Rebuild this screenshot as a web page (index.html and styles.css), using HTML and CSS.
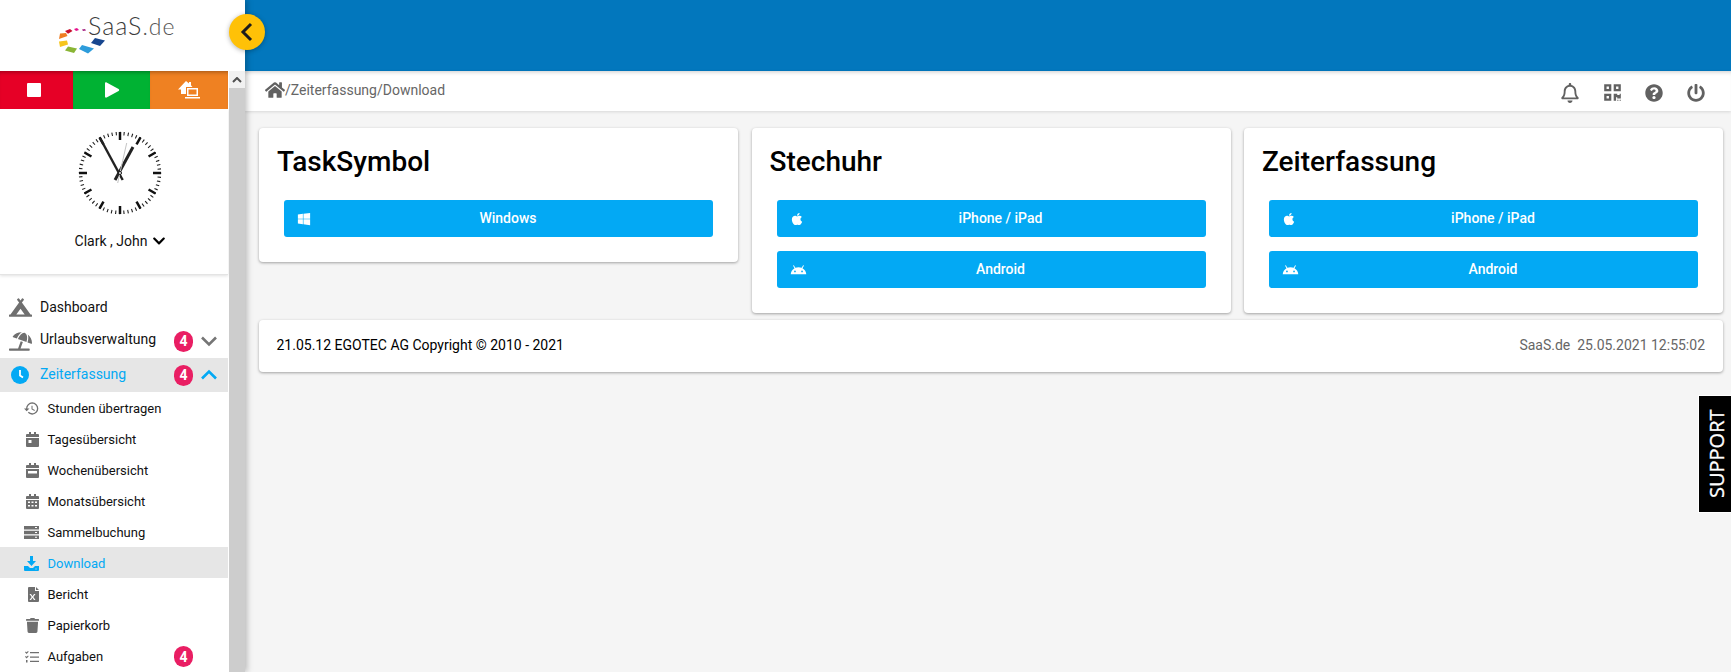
FILE: index.html
```html
<!DOCTYPE html>
<html lang="de">
<head>
<meta charset="utf-8">
<title>Zeiterfassung - Download</title>
<link rel="stylesheet" href="styles.css">
</head>
<body>
<div class="app">
  <aside class="sidebar">
    <div class="logo">
      <svg class="logo-svg" viewBox="0 0 245 71" width="245" height="71">
        <polygon points="60,33.500 66,33 67.500,36 59,39" fill="#ef7d22"/>
        <polygon points="65,31 70,29 72.500,31 68,33.800" fill="#c8102e"/>
        <polygon points="74,29 77,28 79,30 76,31" fill="#e5128c"/>
        <polygon points="82,29.500 85,29 86,30.500 83,31" fill="#a4217f"/>
        <polygon points="59,41.500 67,40.500 68,44.500 60,47" fill="#f6c51b"/>
        <polygon points="68,46.500 77,48.500 74,53 65,50.500" fill="#8ab535"/>
        <polygon points="82,45 94,48.500 88,53.500 79,49" fill="#2d9cdb"/>
        <polygon points="95,38 105,40.500 100,46 91,43" fill="#17468f"/>
        <text class="logo-text" x="88" y="34.500">SaaS<tspan class="logo-de">.de</tspan></text>
      </svg>
    </div>
    <div class="side-body">
      <div class="side-content">
        <div class="actions">
          <button class="act act-red"><span class="stop"></span></button>
          <button class="act act-green"><svg width="16" height="17" viewBox="0 0 16 17"><path class="w" d="M1 1.500c0-1 .8-1.400 1.600-1l12 6.500c.8.500.8 1.500 0 2l-12 6.500c-.8.400-1.600 0-1.600-1z"/></svg></button>
          <button class="act act-orange"><svg width="22" height="18" viewBox="0 0 22 18"><path class="w" d="M8 0l3 2.600V1h2v3.300L14.500 6H8v7H3V8.500H0zM9 7h11v8H9zm1.500 1.500v5h8v-5zM7 16h15v1.500H7z"/></svg></button>
        </div>
        <div class="profile">
          <svg class="clock" width="100" height="100" viewBox="-50 -50 100 100">
            <circle class="minutes" r="39.500" transform="rotate(-90)"/>
            <g class="hours">
              <line y1="-41" y2="-33"/>
              <line y1="-41" y2="-33" transform="rotate(30)"/>
              <line y1="-41" y2="-33" transform="rotate(60)"/>
              <line y1="-41" y2="-33" transform="rotate(90)"/>
              <line y1="-41" y2="-33" transform="rotate(120)"/>
              <line y1="-41" y2="-33" transform="rotate(150)"/>
              <line y1="-41" y2="-33" transform="rotate(180)"/>
              <line y1="-41" y2="-33" transform="rotate(210)"/>
              <line y1="-41" y2="-33" transform="rotate(240)"/>
              <line y1="-41" y2="-33" transform="rotate(270)"/>
              <line y1="-41" y2="-33" transform="rotate(300)"/>
              <line y1="-41" y2="-33" transform="rotate(330)"/>
            </g>
            <line class="hand-h" x1="-5" y1="7" x2="13" y2="-26"/>
            <line class="hand-m" x1="2.700" y1="7" x2="-20" y2="-35"/>
            <line class="hand-s" x1="-2.300" y1="10" x2="6.700" y2="-30"/>
            <circle class="hub" r="1.500"/>
          </svg>
          <div class="user">Clark , John <svg width="14" height="14" viewBox="0 0 448 512"><path d="M207 381.500L12.700 187.100c-9.400-9.400-9.400-24.600 0-33.900l22.700-22.700c9.400-9.400 24.500-9.400 33.900 0L224 284.500l154.700-154c9.400-9.300 24.500-9.300 33.900 0l22.700 22.700c9.400 9.400 9.400 24.600 0 33.900L241 381.500c-9.400 9.400-24.600 9.400-34 0z"/></svg></div>
        </div>
        <nav class="nav">
          <a class="row main">
            <span class="ic-main"><svg width="23" height="19" viewBox="0 0 640 512"><path class="g" d="M624 448h-24.680L359.540 117.750l53.410-73.550c5.190-7.150 3.610-17.160-3.540-22.350l-25.900-18.790c-7.150-5.190-17.150-3.610-22.350 3.550L320 63.300 278.830 6.600c-5.190-7.150-15.200-8.740-22.350-3.550l-25.880 18.800c-7.150 5.190-8.740 15.200-3.540 22.350l53.410 73.550L40.680 448H16c-8.840 0-16 7.160-16 16v32c0 8.840 7.160 16 16 16h608c8.840 0 16-7.160 16-16v-32c0-8.840-7.160-16-16-16zM320 288l116.360 160H203.640L320 288z"/></svg></span>
            <span class="label">Dashboard</span>
          </a>
          <a class="row main lift">
            <span class="ic-main"><svg width="23" height="19" viewBox="0 0 640 512"><path class="g" d="M115.380 136.900l102.110 37.180c35.190-81.540 86.210-144.290 139-173.700-95.880-4.890-188.780 36.960-248.530 111.800-6.690 8.400-2.660 21.050 7.420 24.720zm132.250 48.160l238.480 86.830c35.760-121.380 18.700-231.660-42.630-253.980-7.400-2.700-15.130-4-23.090-4-58.020.01-128.270 69.170-172.760 171.150zM521.480 60.500c6.220 16.300 10.830 34.600 13.200 55.190 5.740 49.890-1.420 108.230-18.950 166.980l102.620 37.360c10.090 3.670 21.310-3.430 21.570-14.170 2.320-95.690-41.910-187.440-118.440-245.360zM560 447.980H321.060L386 269.500l-60.140-21.900-72.900 200.370H16c-8.840 0-16 7.160-16 16.010v32.010C0 504.830 7.160 512 16 512h544c8.840 0 16-7.170 16-16.010v-32.010c0-8.840-7.160-16-16-16z"/></svg></span>
            <span class="label">Urlaubsverwaltung</span>
            <span class="badge">4</span>
            <svg class="chev" width="18" height="12" viewBox="0 0 18 12"><path class="chev-g" d="M2 2.500l7 7 7-7"/></svg>
          </a>
          <a class="row main active lift-small">
            <span class="ic-main"><svg width="18" height="18" viewBox="0 0 18 18"><circle class="b" cx="9" cy="9" r="9"/><path class="clockhand" d="M9 4v5.500l3 2"/></svg></span>
            <span class="label">Zeiterfassung</span>
            <span class="badge">4</span>
            <svg class="chev" width="18" height="12" viewBox="0 0 18 12"><path class="chev-b" d="M2 9.500l7-7 7 7"/></svg>
          </a>
          <a class="row sub">
            <span class="ic-sub"><svg width="15" height="15" viewBox="1 3 22 18"><path class="g" d="M13 3a9 9 0 0 0-9 9H1l3.890 3.890.07.14L9 12H6c0-3.870 3.130-7 7-7s7 3.130 7 7-3.130 7-7 7c-1.930 0-3.680-.79-4.940-2.060l-1.420 1.420A8.954 8.954 0 0 0 13 21a9 9 0 0 0 0-18zm-1 5v5l4.280 2.540.72-1.210-3.500-2.080V8H12z"/></svg></span>
            <span class="label">Stunden übertragen</span>
          </a>
          <a class="row sub">
            <span class="ic-sub"><svg width="13" height="15" viewBox="0 0 13 15"><path class="g" fill-rule="evenodd" d="M3 0h2v2h3V0h2v2h2a1 1 0 0 1 1 1v2H0V3a1 1 0 0 1 1-1h2zM0 6h13v8a1 1 0 0 1-1 1H1a1 1 0 0 1-1-1zm2.500 2v3h3V8z"/></svg></span>
            <span class="label">Tagesübersicht</span>
          </a>
          <a class="row sub">
            <span class="ic-sub"><svg width="13" height="15" viewBox="0 0 13 15"><path class="g" fill-rule="evenodd" d="M3 0h2v2h3V0h2v2h2a1 1 0 0 1 1 1v2H0V3a1 1 0 0 1 1-1h2zM0 6h13v8a1 1 0 0 1-1 1H1a1 1 0 0 1-1-1zm2 2v2.500h9V8z"/></svg></span>
            <span class="label">Wochenübersicht</span>
          </a>
          <a class="row sub">
            <span class="ic-sub"><svg width="13" height="15" viewBox="0 0 13 15"><path class="g" fill-rule="evenodd" d="M3 0h2v2h3V0h2v2h2a1 1 0 0 1 1 1v2H0V3a1 1 0 0 1 1-1h2zM0 6h13v8a1 1 0 0 1-1 1H1a1 1 0 0 1-1-1zm2 1.500V9h2V7.500zm3.500 0V9h2V7.500zm3.500 0V9h2V7.500zM2 11v1.500h2V11zm3.500 0v1.500h2V11zm3.500 0v1.500h2V11z"/></svg></span>
            <span class="label">Monatsübersicht</span>
          </a>
          <a class="row sub">
            <span class="ic-sub"><svg width="15" height="13" viewBox="0 0 15 13"><path class="g" fill-rule="evenodd" d="M0 0h15v3.500H0zM0 4.700h15v3.600H0zM0 9.500h15V13H0zM11 1v1h2V1zM11 6v1h2V6zM11 10.700v1h2v-1z"/></svg></span>
            <span class="label">Sammelbuchung</span>
          </a>
          <a class="row sub active">
            <span class="ic-sub"><svg width="15" height="15" viewBox="0 0 15 15"><path class="b" fill-rule="evenodd" d="M6 0h3v5h3L7.500 10 3 5h3zM0 10h4l2 2h3l2-2h4v4a1 1 0 0 1-1 1H1a1 1 0 0 1-1-1zm11.500 2.500v1h1v-1z"/></svg></span>
            <span class="label">Download</span>
          </a>
          <a class="row sub">
            <span class="ic-sub"><svg width="11" height="15" viewBox="0 0 11 15"><path class="g" fill-rule="evenodd" d="M0 1a1 1 0 0 1 1-1h6v4h4v10a1 1 0 0 1-1 1H1a1 1 0 0 1-1-1zM8 0l3 3H8zM3 7l1.500 2.200L6 7h1.500L5.300 10l2.200 3H6l-1.500-2.200L3 13H1.500l2.200-3-2.200-3z"/></svg></span>
            <span class="label">Bericht</span>
          </a>
          <a class="row sub">
            <span class="ic-sub"><svg width="13" height="15" viewBox="0 0 448 512"><path class="g" d="M432 32H312l-9.400-18.700A24 24 0 0 0 281.100 0H166.800a23.720 23.720 0 0 0-21.400 13.300L136 32H16A16 16 0 0 0 0 48v32a16 16 0 0 0 16 16h416a16 16 0 0 0 16-16V48a16 16 0 0 0-16-16zM53.200 467a48 48 0 0 0 47.900 45h245.800a48 48 0 0 0 47.900-45L416 128H32z"/></svg></span>
            <span class="label">Papierkorb</span>
          </a>
          <a class="row sub">
            <span class="ic-sub"><svg width="14" height="12" viewBox="0 0 14 12"><path class="g" d="M5 1h9v1.300H5zM5 5.400h9v1.300H5zM5 9.800h9v1.300H5zM0 1.200l.8-.7.8.8L3 0l.7.700-2.100 2.200zM0 5.700l.8-.7.8.8L3 4.500l.7.700-2.100 2.200zM1 9h1.500v2.500H1z"/></svg></span>
            <span class="label">Aufgaben</span>
            <span class="badge">4</span>
            <span class="chev-space"></span>
          </a>
        </nav>
      </div>
      <div class="scrollbar">
        <div class="scroll-btn"><svg width="10" height="6" viewBox="0 0 10 6"><path class="scroll-arrow" d="M1 5l4-4 4 4"/></svg></div>
        <div class="scroll-thumb"></div>
      </div>
    </div>
  </aside>

  <div class="main-area">
    <header class="topbar"></header>
    <div class="crumbbar">
      <div class="crumbs">
        <svg width="20" height="18" viewBox="0 0 576 512"><path class="g6" d="M280.370 148.260L96 300.110V464a16 16 0 0 0 16 16l112.060-.29a16 16 0 0 0 15.920-16V368a16 16 0 0 1 16-16h64a16 16 0 0 1 16 16v95.640a16 16 0 0 0 16 16.050L464 480a16 16 0 0 0 16-16V300L295.670 148.260a12.190 12.190 0 0 0-15.300 0zM571.600 251.470L488 182.560V44.050a12 12 0 0 0-12-12h-56a12 12 0 0 0-12 12v72.610L318.470 43a48 48 0 0 0-61 0L4.340 251.470a12 12 0 0 0-1.600 16.900l25.500 31A12 12 0 0 0 45.150 301l235.220-193.740a12.190 12.190 0 0 1 15.300 0L530.900 301a12 12 0 0 0 16.900-1.600l25.500-31a12 12 0 0 0-1.700-16.930z"/></svg>
        <span>/Zeiterfassung/Download</span>
      </div>
      <div class="tools">
        <svg width="18" height="20" viewBox="0 0 448 512"><path class="g6" d="M439.390 362.290c-19.320-20.760-55.470-51.990-55.470-154.290 0-77.700-54.480-139.900-127.940-155.160V32c0-17.670-14.320-32-31.980-32s-31.980 14.330-31.980 32v20.840C118.560 68.100 64.080 130.300 64.080 208c0 102.300-36.150 133.530-55.470 154.290-6 6.450-8.660 14.160-8.610 21.710.11 16.400 12.980 32 32.100 32h383.800c19.120 0 32-15.600 32.100-32 .05-7.550-2.610-15.270-8.610-21.710zM67.530 368c21.220-27.970 44.420-74.330 44.530-159.420 0-.2-.06-.38-.06-.58 0-61.860 50.140-112 112-112s112 50.140 112 112c0 .2-.06.38-.06.58.11 85.100 23.310 131.460 44.530 159.420H67.530zM224 512c35.320 0 63.970-28.650 63.970-64H160.030c0 35.350 28.650 64 63.970 64z"/></svg>
        <svg width="17" height="19" viewBox="0 0 448 512"><path class="g6" d="M0 224h192V32H0v192zM64 96h64v64H64V96zm192-64v192h192V32H256zm128 128h-64V96h64v64zM0 480h192V288H0v192zm64-128h64v64H64v-64zm352-64h32v128h-96v-32h-32v96h-64V288h96v32h64v-32zm0 160h32v32h-32v-32zm-64 0h32v32h-32v-32z"/></svg>
        <svg width="18" height="18" viewBox="0 0 512 512"><path class="g6" d="M504 256c0 136.997-111.043 248-248 248S8 392.997 8 256C8 119.083 119.043 8 256 8s248 111.083 248 248zM262.655 90c-54.497 0-89.255 22.957-116.549 63.758-3.536 5.286-2.353 12.415 2.715 16.258l34.699 26.310c5.205 3.947 12.621 3.008 16.665-2.122 17.864-22.658 30.113-35.797 57.303-35.797 20.429 0 45.698 13.148 45.698 32.958 0 14.976-12.363 22.667-32.534 33.976C247.128 238.528 216 254.941 216 296v4c0 6.627 5.373 12 12 12h56c6.627 0 12-5.373 12-12v-1.333c0-28.462 83.186-29.647 83.186-106.667 0-58.002-60.165-102-116.531-102zM256 338c-25.365 0-46 20.635-46 46 0 25.364 20.635 46 46 46s46-20.636 46-46c0-25.365-20.635-46-46-46z"/></svg>
        <svg width="18" height="18" viewBox="0 0 512 512"><path class="g6" d="M400 54.100c63 45 104 118.600 104 201.900 0 136.800-110.800 247.700-247.500 248C120 504.300 8.200 393 8 256.400 7.900 173.100 48.900 99.300 111.800 54.200c11.700-8.300 28-4.800 35 7.700L162.600 90c5.900 10.500 3.100 23.800-6.600 31-41.500 30.800-68 79.600-68 134.900-.1 92.300 74.500 168.100 168 168.100 91.600 0 168.600-74.200 168-169.100-.3-51.800-24.700-101.800-68.100-134-9.700-7.200-12.400-20.500-6.500-30.900l15.800-28.100c7-12.400 23.200-16.100 34.800-7.800zM296 264V24c0-13.300-10.700-24-24-24h-32c-13.300 0-24 10.700-24 24v240c0 13.300 10.700 24 24 24h32c13.300 0 24-10.700 24-24z"/></svg>
      </div>
    </div>
    <main class="content">
      <div class="cards">
        <section class="card">
          <h2>TaskSymbol</h2>
          <a class="dl"><svg class="dl-ic" width="14" height="14" viewBox="0 0 448 512"><path class="w" d="M0 93.700l183.600-25.300v177.400H0V93.700zm0 324.600l183.600 25.300V268.400H0v149.900zm203.800 28L448 480V268.400H203.800v177.900zm0-380.600v180.100H448V32L203.800 65.700z"/></svg>Windows</a>
        </section>
        <section class="card">
          <h2>Stechuhr</h2>
          <a class="dl"><svg class="dl-ic" width="14" height="14" viewBox="0 0 384 512"><path class="w" d="M318.700 268.700c-.2-36.700 16.400-64.400 50-84.800-18.800-26.900-47.200-41.700-84.700-44.600-35.500-2.800-74.300 20.700-88.500 20.700-15 0-49.400-19.700-76.400-19.700C63.300 141.200 4 184.800 4 273.500q0 39.300 14.400 81.200c12.800 36.700 59 126.700 107.200 125.200 25.200-.6 43-17.900 75.800-17.900 31.800 0 48.300 17.900 76.400 17.900 48.600-.7 90.400-82.500 102.600-119.300-65.200-30.700-61.700-90-61.700-91.900zm-56.600-164.200c27.300-32.400 24.800-61.900 24-72.500-24.100 1.400-52 16.400-67.900 34.900-17.500 19.800-27.800 44.300-25.600 71.900 26.100 2 49.900-11.400 69.500-34.300z"/></svg>iPhone / iPad</a>
          <a class="dl"><svg class="dl-ic" width="17" height="17" viewBox="0 0 24 24"><path class="w" d="M17.600 9.480l1.840-3.180c.16-.31.04-.69-.26-.85a.637.637 0 0 0-.83.22l-1.880 3.240a11.430 11.430 0 0 0-8.940 0L5.650 5.670a.643.643 0 0 0-.87-.2c-.28.18-.37.54-.22.83L6.400 9.480A10.810 10.810 0 0 0 1 18h22a10.810 10.810 0 0 0-5.400-8.520zM7 15.250a1.250 1.250 0 1 1 0-2.500 1.250 1.250 0 0 1 0 2.500zm10 0a1.250 1.250 0 1 1 0-2.500 1.250 1.250 0 0 1 0 2.500z"/></svg>Android</a>
        </section>
        <section class="card">
          <h2>Zeiterfassung</h2>
          <a class="dl"><svg class="dl-ic" width="14" height="14" viewBox="0 0 384 512"><path class="w" d="M318.700 268.700c-.2-36.700 16.400-64.400 50-84.800-18.800-26.900-47.200-41.700-84.700-44.600-35.500-2.800-74.300 20.700-88.500 20.700-15 0-49.400-19.700-76.400-19.700C63.300 141.200 4 184.800 4 273.500q0 39.300 14.400 81.200c12.800 36.700 59 126.700 107.200 125.200 25.200-.6 43-17.900 75.800-17.900 31.800 0 48.300 17.900 76.400 17.900 48.600-.7 90.400-82.500 102.600-119.300-65.200-30.700-61.700-90-61.700-91.900zm-56.600-164.200c27.300-32.400 24.800-61.900 24-72.500-24.100 1.400-52 16.400-67.900 34.900-17.500 19.800-27.800 44.300-25.600 71.900 26.100 2 49.900-11.400 69.500-34.300z"/></svg>iPhone / iPad</a>
          <a class="dl"><svg class="dl-ic" width="17" height="17" viewBox="0 0 24 24"><path class="w" d="M17.600 9.480l1.840-3.180c.16-.31.04-.69-.26-.85a.637.637 0 0 0-.83.22l-1.880 3.240a11.430 11.430 0 0 0-8.940 0L5.650 5.670a.643.643 0 0 0-.87-.2c-.28.18-.37.54-.22.83L6.400 9.480A10.810 10.810 0 0 0 1 18h22a10.810 10.810 0 0 0-5.400-8.520zM7 15.250a1.250 1.250 0 1 1 0-2.500 1.250 1.250 0 0 1 0 2.500zm10 0a1.250 1.250 0 1 1 0-2.500 1.250 1.250 0 0 1 0 2.500z"/></svg>Android</a>
        </section>
      </div>
      <footer class="foot">
        <span>21.05.12 EGOTEC AG Copyright © 2010 - 2021</span>
        <span class="foot-right">SaaS.de&nbsp; 25.05.2021 12:55:02</span>
      </footer>
    </main>
  </div>

  <button class="collapse"><svg width="14" height="20" viewBox="0 0 14 20"><path class="collapse-arrow" d="M11 2L3 10l8 8"/></svg></button>
  <div class="support">SUPPORT</div>
</div>
</body>
</html>
```

FILE: styles.css
```css
* { box-sizing: border-box; }
html, body { margin: 0; height: 100%; }
body {
  font-family: Roboto, "Liberation Sans", sans-serif;
  font-size: 14px;
  color: #000;
  background: #f5f5f5;
  overflow: hidden;
}
button { border: 0; padding: 0; font: inherit; }
svg { display: block; }
.w { fill: #fff; }
.g { fill: #6f6f6f; }
.g6 { fill: #616161; }
.b { fill: #03a9f4; }

.app { position: relative; display: flex; height: 672px; overflow: hidden; }

/* Sidebar */
.sidebar {
  width: 245px;
  flex: none;
  display: flex;
  flex-direction: column;
  height: 672px;
  background: #fff;
  box-shadow: 2px 0 6px rgba(0,0,0,.25);
  z-index: 2;
}
.logo { height: 71px; flex: none; background: #fff; }
.logo-text { font-family: Lato, sans-serif; font-weight: 300; font-size: 25px; letter-spacing: 1px; fill: #3a3a3a; }
.logo-de { fill: #555; font-size: 23px; }

.side-body { flex: 1; display: flex; min-height: 0; }
.side-content { width: 229px; flex: none; overflow: hidden; }
.actions { display: flex; height: 38px; width: 228px; }
.act { display: flex; align-items: center; justify-content: center; box-shadow: inset 0 4px 4px -3px rgba(0,0,0,.35); }
.act-red { width: 73px; background: #e60026; padding-right: 5px; }
.act-green { width: 77px; background: #00b233; }
.act-orange { width: 78px; background: #ef8122; }
.stop { width: 14px; height: 14px; background: #fff; border-radius: 1px; }

.profile {
  height: 166px;
  padding: 14px 0 0 12px;
  display: flex;
  flex-direction: column;
  align-items: center;
  border-bottom: 1px solid #e4e4e4;
  box-shadow: 0 1px 3px rgba(0,0,0,.12);
  width: 228px;
}
.minutes { fill: none; stroke: #222; stroke-width: 3.500; stroke-dasharray: 1.100 3.036; stroke-dashoffset: .55; }
.hours line { stroke: #111; stroke-width: 2.500; }
.hand-h { stroke: #222; stroke-width: 3; }
.hand-m { stroke: #222; stroke-width: 2.400; }
.hand-s { stroke: #c4c4c4; stroke-width: 1; }
.hub { fill: #fff; stroke: #111; stroke-width: 1; }
.user { display: flex; align-items: center; gap: 5px; margin: 10px 0 0 1px; font-size: 14px; color: #111; }

.nav { padding-top: 15px; width: 228px; }
.row { display: flex; align-items: center; color: #111; }
.main { height: 34px; font-size: 14px; }
.sub { height: 31px; font-size: 13px; padding-top: 2px; }
.lift .label { padding-bottom: 4px; }
.lift-small .label { padding-bottom: 2px; }
.active { background: #e6e6e6; color: #03a9f4; }
.ic-main { width: 40px; flex: none; display: flex; justify-content: center; }
.ic-sub { width: 47.500px; flex: none; display: flex; justify-content: flex-end; padding-right: 8.500px; }
.label { flex: 1; white-space: nowrap; }
.badge {
  width: 19px;
  height: 21px;
  border-radius: 10px;
  background: #e91e63;
  color: #fff;
  font-size: 14px;
  font-weight: 700;
  display: flex;
  align-items: center;
  justify-content: center;
  flex: none;
}
.chev { margin: 0 10px 0 7px; flex: none; }
.chev-space { width: 35px; flex: none; }
.chev-g { fill: none; stroke: #757575; stroke-width: 2.600; }
.chev-b { fill: none; stroke: #03a9f4; stroke-width: 2.600; }
.clockhand { fill: none; stroke: #fff; stroke-width: 1.800; }

.scrollbar { width: 16px; flex: none; background: #cdcdcd; }
.scroll-btn { height: 17px; background: #f1f1f1; display: flex; align-items: center; justify-content: center; }
.scroll-arrow { fill: none; stroke: #505050; stroke-width: 2; }

/* Main */
.main-area { flex: 1; display: flex; flex-direction: column; min-width: 0; }
.topbar { height: 71px; flex: none; background: #0277bd; }
.crumbbar {
  height: 40px;
  flex: none;
  background: #fff;
  display: flex;
  align-items: center;
  justify-content: space-between;
  padding: 0 14px 2px 20px;
  box-shadow: inset 0 4px 4px -3px rgba(0,0,0,.2), 0 1px 3px rgba(0,0,0,.12);
}
.crumbs { display: flex; align-items: center; color: #666; font-size: 14px; }
.tools { display: grid; grid-template-columns: repeat(4, 42px); justify-items: center; align-items: center; padding-top: 5px; }

.content { padding: 17px 8px 0 14px; }
.cards { display: grid; grid-template-columns: repeat(3, 1fr); gap: 13.500px; align-items: start; }
.cards .card:nth-child(n+2) { min-height: 185px; }
.card {
  background: #fff;
  border-radius: 4px;
  box-shadow: 0 1px 3px rgba(0,0,0,.35);
  padding: 18px 25px 1px;
  min-height: 134px;
}
.card h2 { margin: 0 0 22px -8px; padding-left: 1px; font-size: 28px; font-weight: 500; line-height: 32px; color: #000; }
.dl {
  position: relative;
  display: flex;
  align-items: center;
  justify-content: center;
  height: 37px;
  margin-bottom: 14px;
  padding: 0 0 1px 19px;
  background: #03a9f4;
  border-radius: 3px;
  color: #fff;
  font-size: 14px;
  font-weight: 500;
}
.dl-ic { position: absolute; left: 13px; top: 50%; transform: translateY(-50%); }

.foot {
  margin-top: 7px;
  height: 52px;
  background: #fff;
  border-radius: 4px;
  box-shadow: 0 1px 3px rgba(0,0,0,.35);
  display: flex;
  align-items: center;
  justify-content: space-between;
  padding: 0 18px 2px 17.500px;
  font-size: 14px;
}
.foot-right { color: #666; }

.collapse {
  position: absolute;
  left: 229px;
  top: 14px;
  width: 36px;
  height: 36px;
  border-radius: 50%;
  background: #ffc107;
  display: flex;
  align-items: center;
  justify-content: center;
  box-shadow: 0 1px 5px rgba(0,0,0,.3);
  z-index: 3;
}
.collapse-arrow { fill: none; stroke: #1c1c1c; stroke-width: 3; }
.support {
  position: absolute;
  right: 0;
  top: 396px;
  width: 32px;
  height: 116px;
  padding-right: 3px;
  background: #000;
  color: #fff;
  font-family: "Open Sans", sans-serif;
  font-size: 20px;
  -webkit-text-stroke: .3px #fff;
  writing-mode: vertical-rl;
  transform: rotate(180deg);
  display: flex;
  align-items: center;
  justify-content: center;
  box-shadow: 0 0 0 1px #fff;
}
```
